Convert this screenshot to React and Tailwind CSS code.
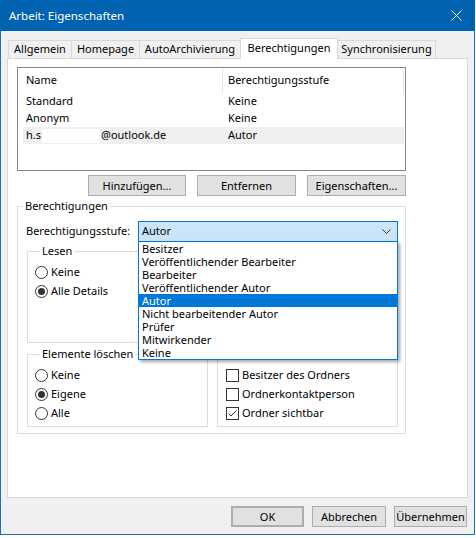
import React from "react";

const Radio = ({ checked, label }) => (
  <div className="flex items-center h-[19px]">
    <span className="w-[13px] h-[13px] rounded-full border border-[#333333] bg-white flex items-center justify-center">
      {checked && <span className="w-[7px] h-[7px] rounded-full bg-[#333333]" />}
    </span>
    <span className="ml-[3px]">{label}</span>
  </div>
);

const Check = ({ checked, label }) => (
  <div className="flex items-center h-[19px]">
    <span className="w-[13px] h-[13px] border border-[#333333] bg-white flex items-center justify-center">
      {checked && (
        <svg width="11" height="11" viewBox="0 0 11 11">
          <polyline points="1.5,5.5 4,8 9.5,2.5" fill="none" stroke="#333333" strokeWidth="1" />
        </svg>
      )}
    </span>
    <span className="ml-[3px]">{label}</span>
  </div>
);

const Group = ({ title, className = "", children }) => (
  <fieldset className={`border border-[#dcdcdc] ${className}`}>
    <legend className="ml-[5px] px-[2px] leading-[16px] h-[16px]">{title}</legend>
    {children}
  </fieldset>
);

const Btn = ({ children, className = "" }) => (
  <button className={`h-[21px] bg-[#e1e1e1] border border-[#adadad] flex items-center justify-center leading-none ${className}`}>
    {children}
  </button>
);

const items = [
  "Besitzer",
  "Veröffentlichender Bearbeiter",
  "Bearbeiter",
  "Veröffentlichender Autor",
  "Autor",
  "Nicht bearbeitender Autor",
  "Prüfer",
  "Mitwirkender",
  "Keine",
];

export default function App() {
  return (
    <div className="w-[476px] h-[538px] bg-white font-['Noto_Sans','Open_Sans',sans-serif] text-[11px] text-black">
      <div className="w-[475px] h-[535px] flex flex-col">
        {/* Title bar */}
        <div className="h-[31px] bg-[#0063b1] flex items-center justify-between pl-[9px] pr-[13px] text-white">
          <span className="text-[11.5px]">Arbeit: Eigenschaften</span>
          <svg width="11" height="11" viewBox="0 0 11 11">
            <path d="M0.5 0.5 L10.5 10.5 M10.5 0.5 L0.5 10.5" stroke="white" strokeWidth="1" />
          </svg>
        </div>
        {/* Body */}
        <div className="flex-1 bg-[#f0f0f0] border-x border-b border-[#1f6fbf] flex flex-col pt-[7px] px-[6px]">
          {/* Tabs */}
          <div className="flex items-end h-[20px] pl-px">
            <div className="w-[64px] h-[18px] border border-b-0 border-[#d9d9d9] flex items-center justify-center">Allgemein</div>
            <div className="-ml-px w-[69px] h-[18px] border border-b-0 border-[#d9d9d9] flex items-center justify-center">Homepage</div>
            <div className="-ml-px w-[102px] h-[18px] border border-b-0 border-[#d9d9d9] flex items-center justify-center">AutoArchivierung</div>
            <div className="-ml-px w-[98px] h-[21px] -mb-px relative z-10 bg-white border border-b-0 border-[#d9d9d9] flex items-center justify-center pb-[2px]">Berechtigungen</div>
            <div className="-ml-px w-[99px] h-[18px] border border-b-0 border-[#d9d9d9] flex items-center justify-center">Synchronisierung</div>
          </div>
          {/* Panel */}
          <div className="w-[461px] h-[440px] bg-white border border-[#d9d9d9] pl-[9px] pt-[8px]">
            {/* List view */}
            <div className="w-[389px] h-[104px] border border-[#828790] bg-white">
              <div className="h-[25px] flex items-center">
                <div className="w-[204px] pl-[8px]">Name</div>
                <div className="w-px h-[24px] bg-[#e5e5e5]" />
                <div className="w-[180px] pl-[5px]">Berechtigungsstufe</div>
                <div className="w-px h-[24px] bg-[#e5e5e5]" />
              </div>
              <div className="ml-[5px] mr-px">
                <div className="h-[17px] flex items-center">
                  <div className="w-[205px] pl-[3px]">Standard</div>
                  <div>Keine</div>
                </div>
                <div className="h-[17px] flex items-center">
                  <div className="w-[205px] pl-[3px]">Anonym</div>
                  <div>Keine</div>
                </div>
                <div className="h-[17px] flex items-center bg-[#efefef]">
                  <div className="w-[205px] pl-[3px] flex items-center">
                    <span>h.s</span>
                    <span className="inline-block w-[58px] h-[14px] bg-white mx-[1px]" />
                    <span>@outlook.de</span>
                  </div>
                  <div>Autor</div>
                </div>
              </div>
            </div>
            {/* Buttons */}
            <div className="w-[389px] flex justify-end gap-[11px] mt-[4px]">
              <Btn className="w-[98px]">Hinzufügen...</Btn>
              <Btn className="w-[99px]">Entfernen</Btn>
              <Btn className="w-[99px]">Eigenschaften...</Btn>
            </div>
            {/* Berechtigungen group */}
            <Group title="Berechtigungen" className="w-[389px] mt-[2px] pb-[6px]">
              <div className="flex items-center mt-[7px] pl-[8px] h-[21px]">
                <div className="w-[112px]">Berechtigungsstufe:</div>
                <div className="relative w-[260px] h-[21px]">
                  <div className="w-full h-full bg-[#cce4f7] border border-[#0078d7] flex items-center justify-between pl-[3px] pr-[6px]">
                    <span>Autor</span>
                    <svg width="9" height="5" viewBox="0 0 9 5">
                      <polyline points="0.5,0.5 4.5,4.5 8.5,0.5" fill="none" stroke="#333333" strokeWidth="1" />
                    </svg>
                  </div>
                  <div className="absolute left-0 top-[20px] w-full z-20 bg-white border border-[#0078d7] shadow-[2px_2px_3px_rgba(0,0,0,0.35)]">
                    {items.map((t) => (
                      <div
                        key={t}
                        className={`h-[13px] leading-[13px] pl-[3px] ${t === "Autor" ? "bg-[#0078d7] text-white" : ""}`}
                      >
                        {t}
                      </div>
                    ))}
                  </div>
                </div>
              </div>
              <div className="pl-[9px] grid grid-cols-[181px_181px] gap-x-[9px] mt-px items-start">
                <Group title="Lesen" className="h-[100px] pl-[7px]">
                  <div className="mt-[4px]">
                    <Radio label="Keine" />
                    <Radio checked label="Alle Details" />
                  </div>
                </Group>
                <fieldset className="h-[92px] border border-[#dcdcdc] mt-[8px]" />
                <Group title="Elemente löschen" className="h-[81px] pl-[7px] mt-[3px]">
                  <div className="mt-[4px]">
                    <Radio label="Keine" />
                    <Radio checked label="Eigene" />
                    <Radio label="Alle" />
                  </div>
                </Group>
                <fieldset className="h-[73px] border border-[#dcdcdc] mt-[11px] pl-[8px] pt-[11px]">
                  <Check label="Besitzer des Ordners" />
                  <Check label="Ordnerkontaktperson" />
                  <Check checked label="Ordner sichtbar" />
                </fieldset>
              </div>
            </Group>
          </div>
          {/* Bottom buttons */}
          <div className="flex justify-end gap-[8px] mt-[8px] pr-px">
            <Btn className="w-[73px] border-2 border-[#0078d7]">OK</Btn>
            <Btn className="w-[74px]">Abbrechen</Btn>
            <Btn className="w-[73px]">Übernehmen</Btn>
          </div>
        </div>
      </div>
    </div>
  );
}
